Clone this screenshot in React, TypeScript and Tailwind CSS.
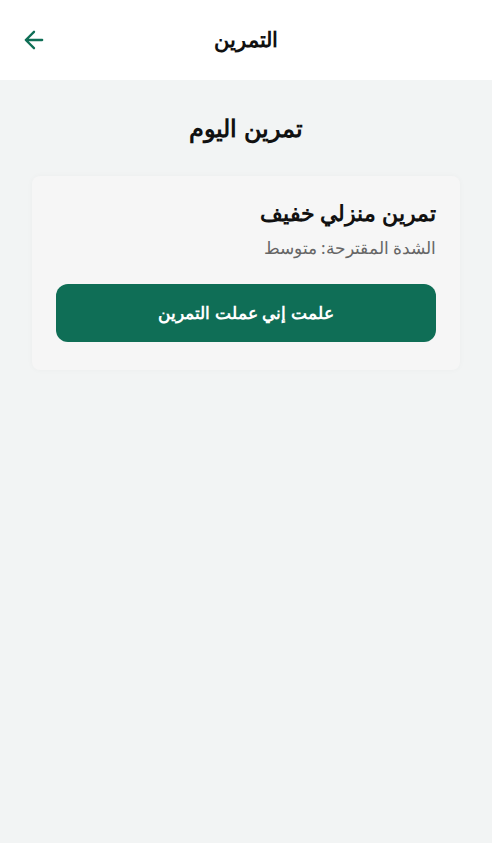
import React from "react";

export default function App() {
	return (
		<div dir="rtl" className="min-h-screen bg-[#f2f4f4] font-['Noto_Sans',sans-serif] text-[#111]">
			<header className="h-20 bg-white flex items-center justify-center relative">
				<h1 className="text-[21px] font-bold">التمرين</h1>
				<button className="absolute left-5 top-1/2 -translate-y-1/2 text-[#0f6e56]">
					<svg className="w-7 h-7" fill="none" stroke="currentColor" viewBox="0 0 24 24">
						<path strokeLinecap="round" strokeLinejoin="round" strokeWidth={2} d="M19 12H5m0 0l7-7m-7 7l7 7" />
					</svg>
				</button>
			</header>

			<main className="px-8 pt-8">
				<h2 className="text-2xl font-semibold text-center">تمرين اليوم</h2>

				<div className="mt-8 bg-[#f6f6f6] rounded-lg shadow-[0_0_6px_rgba(0,0,0,0.03)] px-6 pt-5 pb-7">
					<h3 className="text-[22px] leading-[33px] font-semibold">تمرين منزلي خفيف</h3>
					<p className="mt-1.5 text-[17px] leading-[25px] text-[#666]">الشدة المقترحة: متوسط</p>
					<button className="mt-6 w-full h-[58px] rounded-xl bg-[#0f6e56] text-white font-semibold text-[17px]">
						علمت إني عملت التمرين
					</button>
				</div>
			</main>
		</div>
	);
}
